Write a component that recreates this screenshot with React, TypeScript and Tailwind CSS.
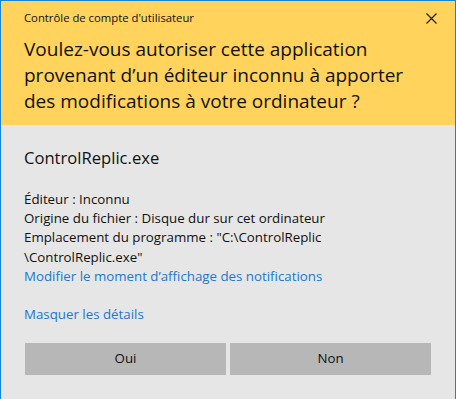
export default function App() {
  const font = { fontFamily: '"Segoe UI", "Open Sans", "Noto Sans", sans-serif' };
  return (
    <div className="w-[456px] h-[399px] bg-[#e6e6e6] border-t border-l border-r border-[#1883d7] flex flex-col overflow-hidden" style={font}>
      <div className="bg-[#ffd35c] h-[124px] flex flex-col px-[23px]">
        <div className="flex items-center justify-between h-[34px] pt-[1px]">
          <span className="text-[11.3px] text-[#111111]">Contrôle de compte d'utilisateur</span>
          <svg width="11" height="11" viewBox="0 0 11 11" className="mr-[-5px]">
            <path d="M0.5 0.5 L10.5 10.5 M10.5 0.5 L0.5 10.5" stroke="#1a1a1a" strokeWidth="1.1" />
          </svg>
        </div>
        <div className="text-[19px] leading-[26px] text-[#111111] mt-[1px] whitespace-nowrap">
          <div>Voulez-vous autoriser cette application</div>
          <div>provenant d’un éditeur inconnu à apporter</div>
          <div>des modifications à votre ordinateur ?</div>
        </div>
      </div>
      <div className="px-[23px] flex flex-col">
        <div className="text-[16.6px] text-[#111111] mt-[22px] leading-[22px]">ControlReplic.exe</div>
        <div className="mt-[21px] text-[13.3px] leading-[19.2px] text-[#111111] whitespace-nowrap">
          <div>Éditeur : Inconnu</div>
          <div>Origine du fichier : Disque dur sur cet ordinateur</div>
          <div>Emplacement du programme : "C:\ControlReplic</div>
          <div>\ControlReplic.exe"</div>
          <div className="text-[#1b77d0]">Modifier le moment d’affichage des notifications</div>
        </div>
        <div className="mt-[19px] text-[13.3px] text-[#1b77d0] leading-[19px]">Masquer les détails</div>
        <div className="mt-[19px] flex gap-[4px] ml-[1px]">
          <button className="w-[201px] h-[32px] bg-[#b7b7b7] text-[13.3px] text-[#111111]">Oui</button>
          <button className="w-[201px] h-[32px] bg-[#b7b7b7] text-[13.3px] text-[#111111]">Non</button>
        </div>
      </div>
    </div>
  );
}
